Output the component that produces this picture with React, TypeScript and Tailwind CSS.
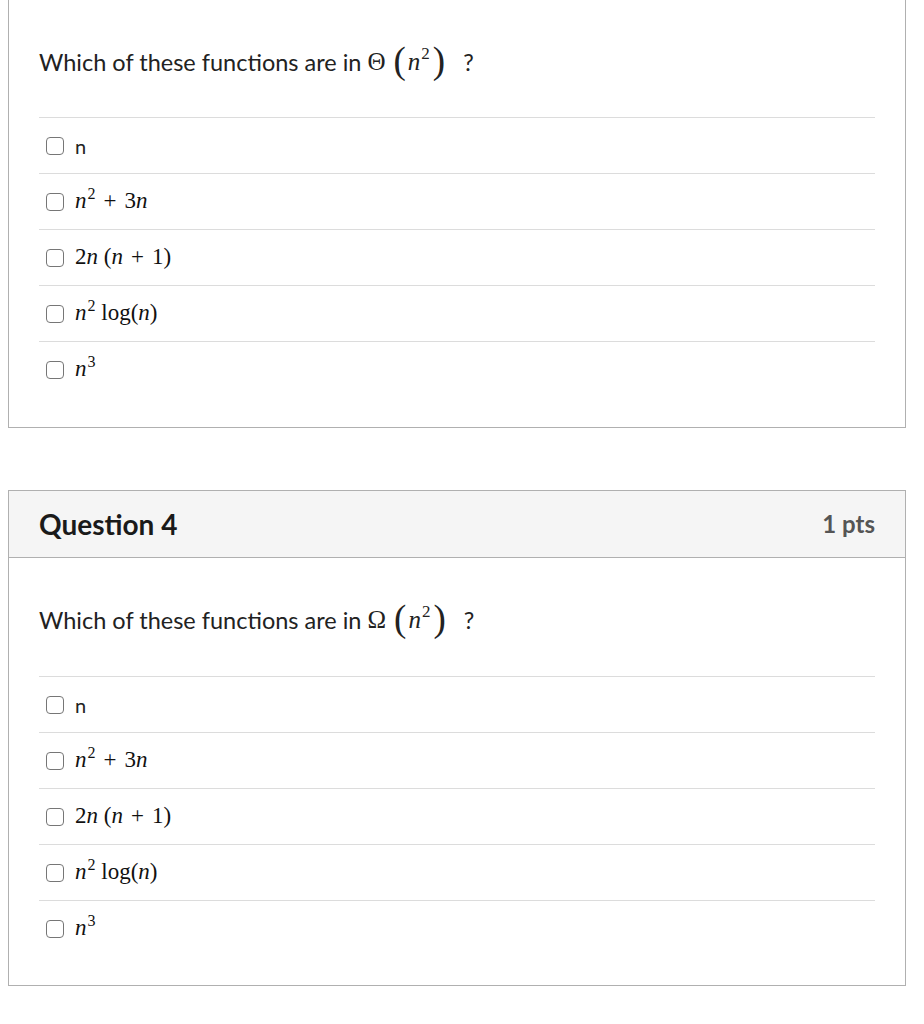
import type { ReactNode } from 'react'

const I = ({ children }: { children: ReactNode }) => <span className="italic">{children}</span>
const Sup = ({ children }: { children: ReactNode }) => (
  <span className="text-[16px] relative top-[-9px] ml-[1px]">{children}</span>
)
const Op = ({ children }: { children: ReactNode }) => <span className="mx-[8px]">{children}</span>

const Math = ({ children }: { children: ReactNode }) => (
  <span className="font-['Liberation_Serif',serif] text-[23px] text-[#111]">{children}</span>
)

const ANSWERS: ReactNode[] = [
  <span key="a" className="text-[20px]">n</span>,
  <Math key="b"><I>n</I><Sup>2</Sup><Op>+</Op>3<I>n</I></Math>,
  <Math key="c">2<I>n</I> (<I>n</I><Op>+</Op>1)</Math>,
  <Math key="d"><I>n</I><Sup>2</Sup> log(<I>n</I>)</Math>,
  <Math key="e"><I>n</I><Sup>3</Sup></Math>,
]

const QuestionText = ({ sym, tall }: { sym: string; tall?: boolean }) => (
  <div className={tall ? 'h-[118px] pt-[38px]' : 'h-[117px] pt-[38px]'}>
    <p className="text-[23.5px] leading-[48px] flex items-center">
      <span>Which of these functions are in</span>
      <span className="font-['Liberation_Serif',serif] text-[25px] ml-[6px]">{sym}</span>
      <span className="font-['Liberation_Serif',serif] ml-[8px] flex items-center">
        <span className="text-[37px] font-light leading-none relative top-[-2px]">(</span>
        <span className="italic text-[25px] ml-[2px]">n</span>
        <span className="text-[17px] relative top-[-8px] ml-[1px]">2</span>
        <span className="text-[37px] font-light leading-none ml-[3px] relative top-[-2px]">)</span>
      </span>
      <span className="ml-[18px]">?</span>
    </p>
  </div>
)

const Answers = () => (
  <div>
    {ANSWERS.map((a, i) => (
      <div key={i} className="h-[56px] border-t border-[#dcdcdc] flex items-center pl-[7px]">
        <span className="w-[18px] h-[18px] rounded-[4px] border-[1.5px] border-[#767676] bg-white shrink-0" />
        <span className="ml-[11px] flex items-center">{a}</span>
      </div>
    ))}
  </div>
)

export default function App() {
  return (
    <div className="bg-white min-h-[1024px] font-['Lato','Noto_Sans',sans-serif] text-[#222] pl-[8px] pr-[18px]">
      <div className="border-x border-b border-[#b0b0b0] px-[30px] pb-[30px]">
        <QuestionText sym="Θ" />
        <Answers />
      </div>

      <div className="mt-[62px] border border-[#b0b0b0]">
        <div className="h-[67px] bg-[#f5f5f5] border-b border-[#b0b0b0] px-[30px] flex items-center justify-between">
          <h2 className="text-[28px] font-bold text-[#1a1a1a]">Question 4</h2>
          <span className="text-[24px] font-bold text-[#555]">1 pts</span>
        </div>
        <div className="px-[30px] pb-[29px]">
          <QuestionText sym="Ω" tall />
          <Answers />
        </div>
      </div>
    </div>
  )
}
